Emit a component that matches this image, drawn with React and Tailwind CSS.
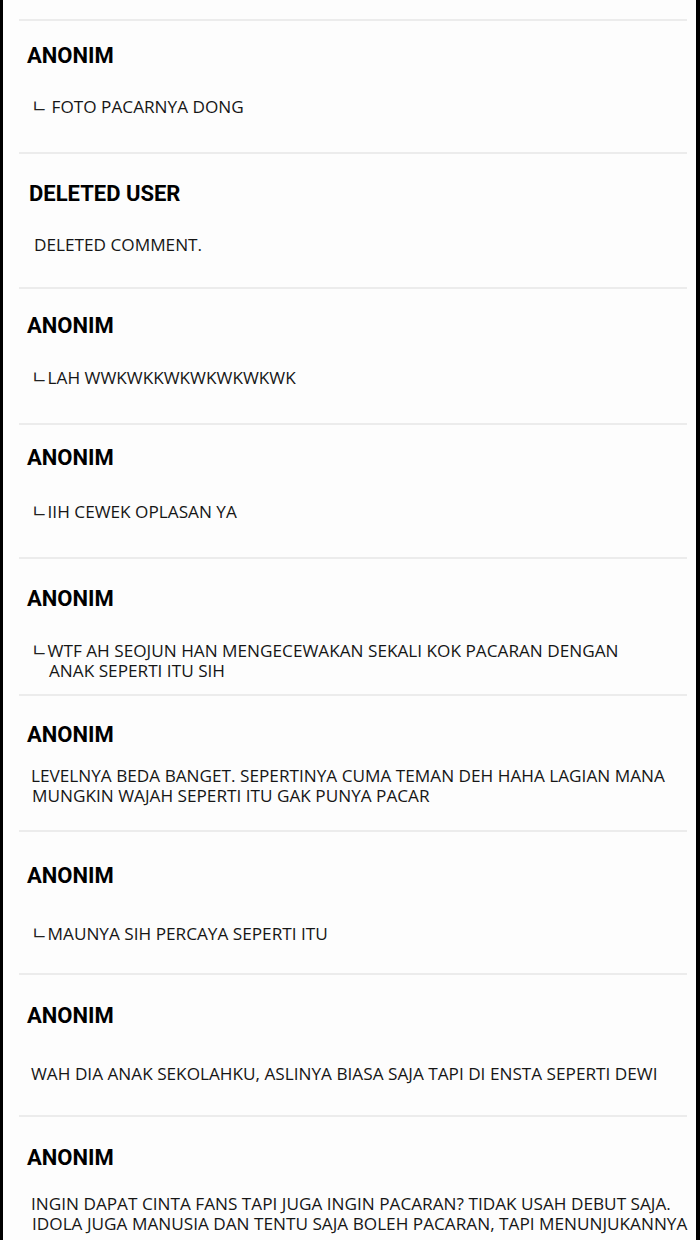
const comments = [
  { name: 'ANONIM', text: 'FOTO PACARNYA DONG', reply: true, space: true, pad: 'pt-[21px] pb-[35px]', gap: 'mt-[26px]', nameX: 'pl-[8px]', textX: 'pl-[12px]' },
  { name: 'DELETED USER', text: 'DELETED COMMENT.', pad: 'pt-[26px] pb-[32px]', gap: 'mt-[27px]', nameX: 'pl-[10px]', textX: 'pl-[15px]' },
  { name: 'ANONIM', text: 'LAH WWKWKKWKWKWKWKWK', reply: true, pad: 'pt-[23px] pb-[35px]', gap: 'mt-[27px]', nameX: 'pl-[8px]', textX: 'pl-[12px]' },
  { name: 'ANONIM', text: 'IIH CEWEK OPLASAN YA', reply: true, pad: 'pt-[19px] pb-[35px]', gap: 'mt-[29px]', nameX: 'pl-[8px]', textX: 'pl-[12px]' },
  { name: 'ANONIM', lines: ['WTF AH SEOJUN HAN MENGECEWAKAN SEKALI KOK PACARAN DENGAN', 'ANAK SEPERTI ITU SIH'], reply: true, pad: 'pt-[26px] pb-[13px]', gap: 'mt-[27px]', nameX: 'pl-[8px]', textX: 'pl-[12px]' },
  { name: 'ANONIM', lines: ['LEVELNYA BEDA BANGET. SEPERTINYA CUMA TEMAN DEH HAHA LAGIAN MANA', 'MUNGKIN WAJAH SEPERTI ITU GAK PUNYA PACAR'], pad: 'pt-[25px] pb-[24px]', gap: 'mt-[17px]', nameX: 'pl-[8px]', textX: 'pl-[12px]' },
  { name: 'ANONIM', text: 'MAUNYA SIH PERCAYA SEPERTI ITU', reply: true, pad: 'pt-[30px] pb-[29px]', gap: 'mt-[33px]', nameX: 'pl-[8px]', textX: 'pl-[12px]' },
  { name: 'ANONIM', text: 'WAH DIA ANAK SEKOLAHKU, ASLINYA BIASA SAJA TAPI DI ENSTA SEPERTI DEWI', pad: 'pt-[27px] pb-[31px]', gap: 'mt-[34px]', nameX: 'pl-[8px]', textX: 'pl-[12px]' },
  { name: 'ANONIM', lines: ['INGIN DAPAT CINTA FANS TAPI JUGA INGIN PACARAN? TIDAK USAH DEBUT SAJA.', 'IDOLA JUGA MANUSIA DAN TENTU SAJA BOLEH PACARAN, TAPI MENUNJUKANNYA'], pad: 'pt-[27px] pb-[20px]', gap: 'mt-[22px]', nameX: 'pl-[8px]', textX: 'pl-[12px]' },
];

// korean reply mark used in the comment threads
const Mark = ({ space }) => (
  <span className={`inline-block leading-none font-['Noto_Sans_CJK_KR',sans-serif] text-[18px] text-[#222] ${space ? 'mr-[4px]' : 'mr-0'}`}>ㄴ</span>
);

const Comment = ({ c }) => (
  <div className={c.pad}>
    <h3 className={`${c.nameX} font-['Roboto',sans-serif] text-[22px] leading-[28px] font-bold text-black`}>{c.name}</h3>
    <div className={`${c.gap} ${c.textX} font-['Open_Sans',sans-serif] text-[17.2px] leading-[20px] text-[#161616] whitespace-nowrap`}>
      {c.lines ? (
        <>
          <p>{c.reply && <Mark />}{c.lines[0]}</p>
          <p className={c.reply ? 'pl-[18px]' : 'pl-[1px]'}>{c.lines[1]}</p>
        </>
      ) : (
        <p>{c.reply && <Mark space={c.space} />}{c.text}</p>
      )}
    </div>
  </div>
);

export default function App() {
  return (
    <div className="w-[700px] h-[1240px] overflow-hidden bg-[#fdfdfd] border-l-[3px] border-r-[4px] border-black">
      <div className="pt-[19px] pl-[16px] pr-[9px]">
        {comments.map((c, i) => (
          <div key={i} className="border-t-2 border-[#ececec]">
            <Comment c={c} />
          </div>
        ))}
      </div>
    </div>
  );
}
